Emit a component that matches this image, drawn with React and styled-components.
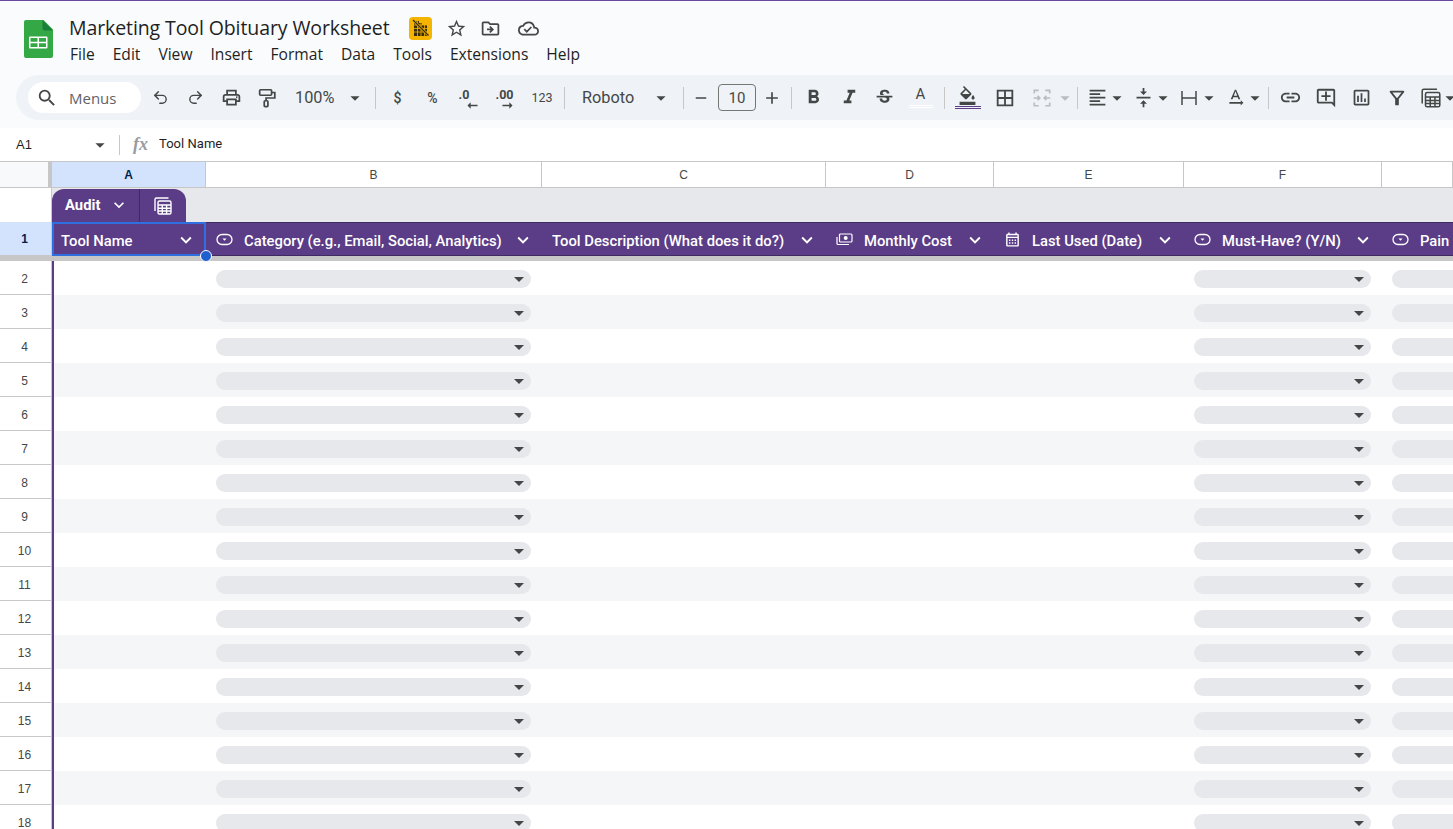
import React from 'react';
import styled, { createGlobalStyle } from 'styled-components';
import { Undo2, Redo2 } from 'lucide-react';
import {
  MdSearch,
  MdOutlineLocalPrintshop,
  MdArrowDropDown,
  MdRemove,
  MdAdd,
  MdFormatBold,
  MdFormatItalic,
  MdOutlineStrikethroughS,
  MdOutlineFormatColorFill,
  MdOutlineBorderAll,
  MdFormatAlignLeft,
  MdVerticalAlignCenter,
  MdLink,
  MdOutlineAddComment,
  MdOutlineAssessment,
  MdOutlineFilterAlt,
  MdStarBorder,
  MdOutlineDriveFileMove,
  MdOutlineCloudDone,
  MdKeyboardArrowDown,
  MdOutlineCalendarMonth,
  MdOutlineTextRotationNone,
} from 'react-icons/md';

const PURPLE = '#5b3c86';
const COLS = '52px 154px 336px 284px 168px 190px 198px 1fr';

const GlobalStyle = createGlobalStyle`
  html, body {
    margin: 0;
    height: 100%;
    overflow: hidden;
    background: #f9fbfd;
    font-family: Roboto, "Liberation Sans", sans-serif;
  }
`;

const Page = styled.div`
  height: 829px;
  overflow: hidden;
  border-top: 1px solid #6a4a9c;
  box-sizing: border-box;
`;

const TopBar = styled.header`
  display: flex;
  height: 74px;
  box-sizing: border-box;
  padding: 19px 0 0 24px;
`;

const Logo = styled.svg`
  width: 29px;
  height: 38px;
  flex: none;
`;

const TitleBlock = styled.div`
  margin: -5px 0 0 16px;
`;

const TitleRow = styled.div`
  display: flex;
  align-items: center;
  height: 26px;
`;

const Title = styled.h1`
  margin: 0;
  font: 400 19.5px/26px "Open Sans", sans-serif;
  letter-spacing: -0.1px;
  color: #1f1f1f;
  white-space: nowrap;
`;

const Badge = styled.span`
  display: flex;
  align-items: center;
  justify-content: center;
  width: 23px;
  height: 23px;
  margin-left: 19px;
  margin-right: 8px;
  border-radius: 4px;
  background: #f4b400;
`;

const TitleIcon = styled.span`
  display: flex;
  width: ${p => p.$w || 34}px;
  justify-content: center;
  color: #444746;
  font-size: 21px;
`;

const Menu = styled.nav`
  display: flex;
  margin-top: 4px;
  padding-left: 1px;
  gap: 18px;
`;

const MenuItem = styled.span`
  font: 400 15.6px/18px "Open Sans", sans-serif;
  color: #1f1f1f;
`;

const Toolbar = styled.div`
  display: flex;
  align-items: center;
  height: 45px;
  margin-left: 16px;
  padding-left: 12px;
  border-radius: 23px 0 0 23px;
  background: #eff3f8;
  color: #444746;
  overflow: hidden;
  white-space: nowrap;
`;

const SearchPill = styled.div`
  display: flex;
  flex: none;
  align-items: center;
  width: 113px;
  height: 31px;
  box-sizing: border-box;
  padding-left: 8px;
  gap: 11px;
  margin-right: 1px;
  border-radius: 16px;
  background: #fff;
  font: 400 15px "Open Sans", sans-serif;
  color: #5f6368;
`;

const Tool = styled.span`
  display: flex;
  flex: none;
  align-items: center;
  justify-content: center;
  width: ${p => p.$w || 36}px;
  height: 30px;
  font-size: ${p => p.$size || 21}px;
  color: ${p => (p.$muted ? '#b9bcc0' : '#444746')};
`;

const Combo = styled.span`
  display: flex;
  flex: none;
  margin-right: 6px;
`;

const Sep = styled.span`
  flex: none;
  width: 1px;
  height: 22px;
  margin: 0 ${p => p.$r}px 0 ${p => p.$l}px;
  background: #c7c7c7;
`;

const Pick = styled.span`
  display: flex;
  flex: none;
  align-items: center;
  justify-content: space-between;
  box-sizing: border-box;
  width: ${p => p.$w}px;
  padding: ${p => p.$pad};
  font-size: 16.3px;
  color: #444746;
`;

const SizeBox = styled.span`
  display: flex;
  flex: none;
  align-items: center;
  justify-content: center;
  width: 38px;
  height: 27px;
  box-sizing: border-box;
  border: 1px solid #747775;
  border-radius: 4px;
  font-size: 15px;
  color: #444746;
`;

const TextTool = styled.span`
  font-size: ${p => p.$size || 13}px;
  font-weight: ${p => p.$weight || 400};
  color: #444746;
`;

const Decimal = styled.span`
  display: flex;
  flex-direction: column;
  align-items: flex-start;
  margin-top: 3px;
  font: 700 12.5px/10px Roboto, sans-serif;
  color: #444746;
  svg {
    margin: 2px 0 0 ${p => p.$shift}px;
  }
`;

const Underlined = styled.span`
  display: flex;
  flex-direction: column;
  align-items: center;
  font-size: 15px;
  line-height: 15px;
  &::after {
    content: '';
    display: block;
    width: ${p => p.$w}px;
    height: 3px;
    margin-top: ${p => p.$gap}px;
    box-sizing: border-box;
    border-top: 1px solid ${p => p.$color};
    border-bottom: 1px solid ${p => p.$color};
  }
`;

const FormulaBar = styled.div`
  display: flex;
  align-items: center;
  height: 33px;
  margin-top: 8px;
  background: #fff;
  font-size: 13px;
  color: #1f1f1f;
`;

const CellRef = styled.span`
  display: flex;
  align-items: center;
  justify-content: space-between;
  box-sizing: border-box;
  width: 119px;
  padding: 0 8px 0 16px;
  font-family: "Liberation Sans", sans-serif;
  font-size: 13px;
  color: #1f1f1f;
`;

const FxDivider = styled.span`
  width: 1px;
  height: 20px;
  background: #c7c7c7;
`;

const Fx = styled.span`
  width: 26px;
  margin: 0 0 0 13px;
  font: italic 700 18px "Liberation Serif", serif;
  color: #9a9b9d;
`;

const FormulaText = styled.span`
  padding-bottom: 2px;
  letter-spacing: 0.03px;
`;

const Sheet = styled.div`
  background: #fff;
`;

const Row = styled.div`
  display: grid;
  grid-template-columns: ${COLS};
  height: ${p => p.$h || 34}px;
`;

const Corner = styled.div`
  box-sizing: border-box;
  border-top: 1px solid #c7c7c7;
  border-bottom: 1px solid #c7c7c7;
  border-right: 4px solid #c7c7c7;
  background: #f8f9fa;
`;

const ColHead = styled.div`
  display: flex;
  align-items: center;
  justify-content: center;
  box-sizing: border-box;
  border-top: 1px solid #c7c7c7;
  border-bottom: 1px solid #c7c7c7;
  border-right: 1px solid #c7c7c7;
  background: ${p => (p.$active ? '#d3e3fd' : '#fff')};
  font: ${p => (p.$active ? 700 : 400)} 12px "Liberation Sans", sans-serif;
  color: ${p => (p.$active ? '#041e49' : '#444746')};
`;

const GroupRow = styled(Row)`
  background: #e7e8ec;
`;

const GroupLabelCell = styled.div`
  width: 52px;
  box-sizing: border-box;
  border-right: 1px solid #c7c7c7;
  background: #fff;
`;

const GroupSpan = styled.div`
  grid-column: 2 / -1;
  display: flex;
  align-items: flex-end;
`;

const GroupTab = styled.div`
  display: flex;
  align-items: center;
  width: 134px;
  height: 33px;
  border-radius: 12px 12px 0 0;
  background: ${PURPLE};
  color: #fff;
  font: 700 14.8px Roboto, sans-serif;
`;

const TabName = styled.span`
  display: flex;
  align-items: center;
  box-sizing: border-box;
  width: 88px;
  height: 100%;
  padding: 0 0 2px 13px;
  gap: 9px;
  border-right: 1px solid #3f2a62;
`;

const TabIcon = styled.span`
  display: flex;
  flex: 1;
  justify-content: center;
`;

const RowNum = styled.div`
  display: flex;
  align-items: center;
  justify-content: center;
  box-sizing: border-box;
  width: 52px;
  padding: ${p => (p.$active ? 0 : 2)}px 2px 0 0;
  border-bottom: 1px solid #c7c7c7;
  border-right: 1px solid #c7c7c7;
  background: ${p => (p.$active ? '#d3e3fd' : '#fff')};
  font: ${p => (p.$active ? 700 : 400)} 12px "Liberation Sans", sans-serif;
  color: ${p => (p.$active ? '#041e49' : '#444746')};
`;

const HeadCell = styled.div`
  position: relative;
  display: flex;
  align-items: center;
  box-sizing: border-box;
  padding: 0 8px 0 10px;
  background: ${PURPLE};
  border-top: 1px solid #3f2a62;
  border-bottom: 1px solid #3f2a62;
  color: #fff;
  font: 500 14.8px Roboto, sans-serif;
  white-space: nowrap;
  overflow: hidden;
`;

const ActiveHead = styled(HeadCell)`
  overflow: visible;
  border: 2px solid #2f6fe0;
  padding-left: 7px;
  padding-right: 7px;
`;

const Handle = styled.span`
  position: absolute;
  right: -8px;
  bottom: -8px;
  width: 10px;
  height: 10px;
  border: 1.5px solid #fff;
  border-radius: 50%;
  background: #1f5fd0;
  z-index: 2;
`;

const HeadIcon = styled.span`
  display: flex;
  flex: none;
  width: 28px;
  font-size: 17px;
`;

const HeadLabel = styled.span`
  flex: 1;
  padding-top: 3px;
`;

const HeadChevron = styled(MdKeyboardArrowDown)`
  flex: none;
  margin-top: 2px;
  font-size: 22px;
`;

const Freeze = styled.div`
  height: 5px;
  background: #c7c7c7;
`;

const Cell = styled.div`
  display: flex;
  align-items: center;
  box-sizing: border-box;
  min-width: 0;
  padding: 1px 11px 0 10px;
  overflow: hidden;
  background: ${p => (p.$alt ? '#f5f6f8' : '#fff')};
  border-left: ${p => (p.$first ? `2px solid ${PURPLE}` : 'none')};
`;

const Chip = styled.div`
  display: flex;
  flex: none;
  align-items: center;
  justify-content: flex-end;
  width: ${p => (p.$min ? `${p.$min}px` : '100%')};
  height: 18px;
  border-radius: 9px;
  background: #e7e8ec;
  color: #444746;
`;

const Caret = styled(MdArrowDropDown)`
  flex: none;
  font-size: 22px;
`;

const ChipCaret = styled(MdArrowDropDown)`
  flex: none;
  font-size: 24px;
`;

const ChipIcon = () => (
  <svg width="17" height="13" viewBox="0 0 17 13" fill="none" stroke="currentColor" strokeWidth="1.3">
    <rect x="1" y="1.5" width="15" height="10" rx="5" />
    <path d="M6.5 5.5h4l-2 2.2z" fill="currentColor" stroke="none" />
  </svg>
);

const MoneyIcon = () => (
  <svg width="17" height="13" viewBox="0 0 17 13" fill="none" stroke="currentColor" strokeWidth="1.2">
    <rect x="3.5" y="1" width="12.500" height="8" rx="1" />
    <circle cx="9.700" cy="5" r="2" fill="currentColor" stroke="none" />
    <path d="M1 4v6.500a1 1 0 0 0 1 1h11" />
  </svg>
);

const CalcIcon = ({ size = 20 }) => (
  <svg width={size} height={size} viewBox="0 0 20 20" fill="none" stroke="currentColor" strokeWidth="1.4">
    <path d="M15.500 2H3.500A1.500 1.500 0 0 0 2 3.500V15" />
    <rect x="5" y="5" width="13" height="13" rx="1.500" />
    <path d="M5 9h13M5 12.200h13M5 15h13M9.300 9v9M13.600 9v9" />
  </svg>
);

const PaintIcon = () => (
  <svg width="22" height="22" viewBox="0 0 24 24" fill="none" stroke="currentColor" strokeWidth="1.900">
    <rect x="4" y="3" width="13" height="6" rx="1" />
    <path d="M17 6h3.500v6H11v3" />
    <rect x="9" y="15" width="4" height="6.500" rx="1" />
  </svg>
);

const MergeIcon = () => (
  <svg width="22" height="22" viewBox="0 0 20 20" fill="none" stroke="currentColor" strokeWidth="1.500">
    <path d="M7 3H3v3M3 14v3h4M13 3h4v3M17 14v3h-4" />
    <path d="M2.500 10H8M6 8l2 2-2 2M17.500 10H12M14 8l-2 2 2 2" />
  </svg>
);

const WrapIcon = () => (
  <svg width="20" height="20" viewBox="0 0 20 20" fill="none" stroke="currentColor" strokeWidth="1.500">
    <path d="M3 3v14M17 3v14M3 10h14" />
  </svg>
);

const LeftArrow = () => (
  <svg width="11" height="7" viewBox="0 0 12 7" fill="currentColor">
    <path d="M4 0 .5 3.500 4 7V4.400h7.500V2.600H4z" />
  </svg>
);

const RightArrow = () => (
  <svg width="11" height="7" viewBox="0 0 12 7" fill="currentColor">
    <path d="M8 0l3.500 3.500L8 7V4.400H.5V2.600H8z" />
  </svg>
);

const SheetsLogo = () => (
  <Logo viewBox="0 0 29 38">
    <path d="M2 0h17.500L29 9.500V36a2 2 0 0 1-2 2H2a2 2 0 0 1-2-2V2a2 2 0 0 1 2-2z" fill="#34a845" />
    <path d="M18.500 0 29 10.500h-8.500a2 2 0 0 1-2-2z" fill="#188038" />
    <rect x="5" y="16.500" width="18.500" height="12" rx="1" fill="#fff" />
    <path d="M6.500 18h7v3.700h-7zM15 18h7v3.700h-7zM6.500 23.200h7V27h-7zM15 23.200h7V27h-7z" fill="#34a845" />
  </Logo>
);

const BadgeIcon = () => (
  <svg width="19" height="19" viewBox="0 0 19 19" fill="none">
    <path d="M3 2h5v2h3v2h5v11H3z" fill="#3a2c05" />
    <path d="M3 6h13M3 9.500h13M3 13h13M6.500 2v15M10 4v13M13.500 6v11" stroke="#f4b400" strokeWidth="0.800" />
    <path d="M2 1l15.500 15.500" stroke="#f4b400" strokeWidth="2.600" />
    <path d="M2 1l15.500 15.500" stroke="#3a2c05" strokeWidth="1.200" />
  </svg>
);

const HEADERS = [
  { label: 'Category (e.g., Email, Social, Analytics)', icon: <ChipIcon /> },
  { label: 'Tool Description (What does it do?)' },
  { label: 'Monthly Cost', icon: <MoneyIcon /> },
  { label: 'Last Used (Date)', icon: <MdOutlineCalendarMonth /> },
  { label: 'Must-Have? (Y/N)', icon: <ChipIcon /> },
  { label: 'Pain Points', icon: <ChipIcon /> },
];

const ROWS = Array.from({ length: 17 }, (_, i) => i + 2);

const App = () => (
  <Page>
    <GlobalStyle />
    <TopBar>
      <SheetsLogo />
      <TitleBlock>
        <TitleRow>
          <Title>Marketing Tool Obituary Worksheet</Title>
          <Badge><BadgeIcon /></Badge>
          <TitleIcon><MdStarBorder /></TitleIcon>
          <TitleIcon><MdOutlineDriveFileMove /></TitleIcon>
          <TitleIcon $w={42}><MdOutlineCloudDone /></TitleIcon>
        </TitleRow>
        <Menu>
          {['File', 'Edit', 'View', 'Insert', 'Format', 'Data', 'Tools', 'Extensions', 'Help'].map(m => (
            <MenuItem key={m}>{m}</MenuItem>
          ))}
        </Menu>
      </TitleBlock>
    </TopBar>

    <Toolbar>
      <SearchPill><MdSearch size={22} color="#444746" />Menus</SearchPill>
      <Tool><Undo2 size={17} strokeWidth={2} /></Tool>
      <Tool $w={35}><Redo2 size={17} strokeWidth={2} /></Tool>
      <Tool><MdOutlineLocalPrintshop /></Tool>
      <Tool $w={35}><PaintIcon /></Tool>
      <Pick $w={82} $pad="0 0 0 11px">100%<Caret /></Pick>
      <Sep $l={9} $r={4} />
      <Tool $w={35}><TextTool $size={14} $weight={500}>$</TextTool></Tool>
      <Tool $w={35}><TextTool $size={14} $weight={500}>%</TextTool></Tool>
      <Tool $w={36}><Decimal $shift={8}>.0<LeftArrow /></Decimal></Tool>
      <Tool $w={37}><Decimal $shift={6}>.00<RightArrow /></Decimal></Tool>
      <Tool $w={38}><TextTool $size={12.500}>123</TextTool></Tool>
      <Sep $l={3} $r={2} />
      <Pick $w={105} $pad="0 0 0 15px">Roboto<Caret /></Pick>
      <Sep $l={11} $r={0} />
      <Tool $w={34}><MdRemove size={18} /></Tool>
      <SizeBox>10</SizeBox>
      <Tool $w={32}><MdAdd size={20} /></Tool>
      <Sep $l={3} $r={3} />
      <Tool><MdFormatBold size={23} /></Tool>
      <Tool><MdFormatItalic size={23} /></Tool>
      <Tool $w={35}><MdOutlineStrikethroughS size={21} /></Tool>
      <Tool $w={37}>
        <Underlined $w={24} $gap={3} $color="#fff">A</Underlined>
      </Tool>
      <Sep $l={5} $r={4} />
      <Tool $w={37}>
        <Underlined $w={26} $gap={1} $color={PURPLE}><MdOutlineFormatColorFill size={19} /></Underlined>
      </Tool>
      <Tool $w={38}><MdOutlineBorderAll size={22} /></Tool>
      <Tool $muted><MergeIcon /></Tool>
      <Tool $w={10} $muted><Caret /></Tool>
      <Sep $l={7} $r={4} />
      <Combo>
        <Tool $w={30}><MdFormatAlignLeft /></Tool>
        <Tool $w={10}><Caret /></Tool>
      </Combo>
      <Combo>
        <Tool $w={30}><MdVerticalAlignCenter /></Tool>
        <Tool $w={10}><Caret /></Tool>
      </Combo>
      <Combo>
        <Tool $w={30}><WrapIcon /></Tool>
        <Tool $w={10}><Caret /></Tool>
      </Combo>
      <Combo>
        <Tool $w={30}><MdOutlineTextRotationNone /></Tool>
        <Tool $w={10}><Caret /></Tool>
      </Combo>
      <Sep $l={2} $r={3} />
      <Tool><MdLink size={23} /></Tool>
      <Tool><MdOutlineAddComment size={22} /></Tool>
      <Tool $w={35}><MdOutlineAssessment /></Tool>
      <Tool><MdOutlineFilterAlt size={22} /></Tool>
      <Tool $w={32}><CalcIcon size={22} /></Tool>
      <Tool $w={6}><Caret /></Tool>
    </Toolbar>

    <FormulaBar>
      <CellRef>A1<Caret color="#444746" /></CellRef>
      <FxDivider />
      <Fx>fx</Fx>
      <FormulaText>Tool Name</FormulaText>
    </FormulaBar>

    <Sheet>
      <Row $h={27}>
        <Corner />
        {['A', 'B', 'C', 'D', 'E', 'F', ''].map((c, i) => (
          <ColHead key={c} $active={i === 0}>{c}</ColHead>
        ))}
      </Row>
      <GroupRow>
        <GroupLabelCell />
        <GroupSpan>
          <GroupTab>
            <TabName>Audit <MdKeyboardArrowDown size={20} /></TabName>
            <TabIcon><CalcIcon /></TabIcon>
          </GroupTab>
        </GroupSpan>
      </GroupRow>
      <Row>
        <RowNum $active>1</RowNum>
        <ActiveHead>
          <HeadLabel>Tool Name</HeadLabel>
          <HeadChevron />
          <Handle />
        </ActiveHead>
        {HEADERS.map(h => (
          <HeadCell key={h.label}>
            {h.icon && <HeadIcon>{h.icon}</HeadIcon>}
            <HeadLabel>{h.label}</HeadLabel>
            <HeadChevron />
          </HeadCell>
        ))}
      </Row>
      <Freeze />
      {ROWS.map(n => {
        const alt = n % 2 === 1;
        return (
          <Row key={n}>
            <RowNum>{n}</RowNum>
            <Cell $alt={alt} $first />
            <Cell $alt={alt}><Chip><ChipCaret /></Chip></Cell>
            <Cell $alt={alt} />
            <Cell $alt={alt} />
            <Cell $alt={alt} />
            <Cell $alt={alt}><Chip><ChipCaret /></Chip></Cell>
            <Cell $alt={alt}><Chip $min={200} /></Cell>
          </Row>
        );
      })}
    </Sheet>
  </Page>
);

export default App;
